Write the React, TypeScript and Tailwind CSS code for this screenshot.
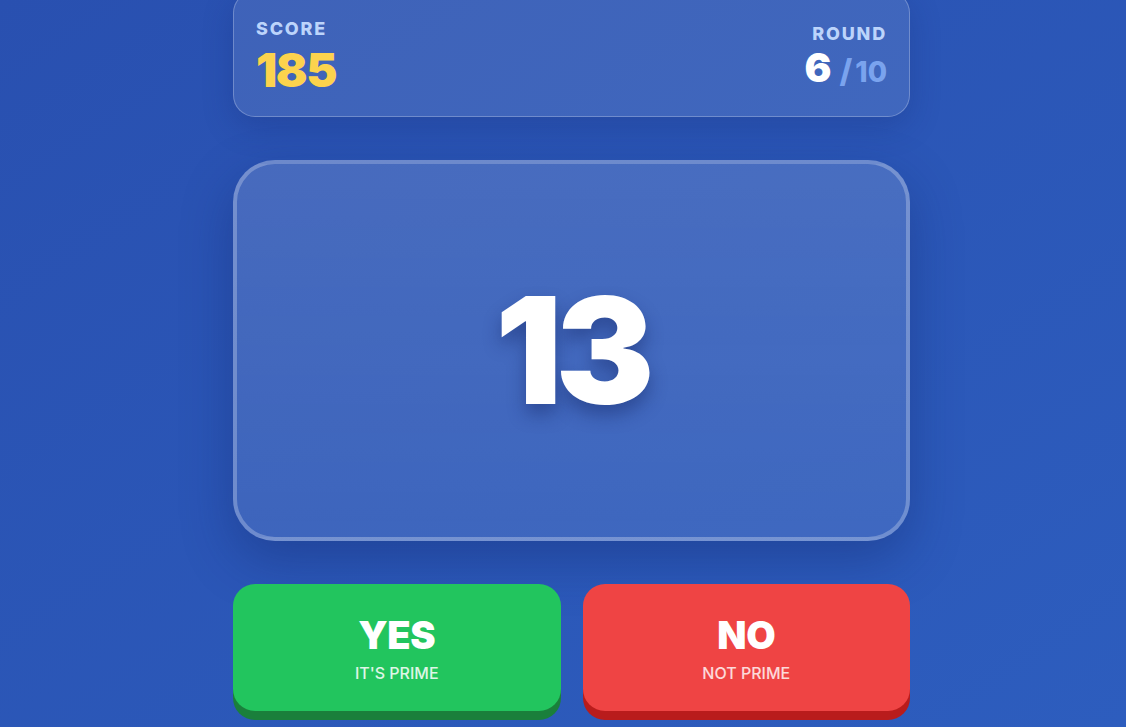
export default function App() {
  const score = 185;
  const round = 6;
  const totalRounds = 10;
  const current = 13;

  return (
    <div
      className="flex h-screen w-full flex-col items-center justify-center overflow-hidden bg-gradient-to-br from-[#2950b0] to-[#2d5dbe] pl-[17px]"
      style={{ fontFamily: "Inter, 'Noto Sans', sans-serif" }}
    >
      <div className="flex w-[677px] flex-col gap-[43px] pb-[25px]">
        {/* Score bar */}
        <div className="flex h-[126px] items-center justify-between rounded-[22px] border border-white/25 bg-white/10 px-[22px] pt-[2px] shadow-[0_10px_30px_rgba(20,40,110,0.25)]">
          <div className="flex flex-col">
            <span className="text-[18px] font-extrabold uppercase leading-[22px] tracking-[0.1em] text-[#bcd4fb]">
              Score
            </span>
            <span className="mt-[8px] text-[47px] font-black leading-[44px] tracking-[-0.03em] text-[#fcd34d]">
              {score}
            </span>
          </div>
          <div className="flex flex-col items-end">
            <span className="text-[18px] font-extrabold uppercase leading-[22px] tracking-[0.1em] text-[#bcd4fb]">
              Round
            </span>
            <div className="mt-[4px] flex items-baseline gap-[8px]">
              <span className="text-[40px] font-black leading-[38px] text-white">{round}</span>
              <span className="text-[28px] font-extrabold leading-[28px] text-[#7aa3ee]">
                <span className="text-[32px]">/</span>
                <span className="ml-[3px]">{totalRounds}</span>
              </span>
            </div>
          </div>
        </div>

        {/* Number card */}
        <div className="flex h-[381px] items-center justify-center rounded-[42px] border-4 border-white/25 bg-gradient-to-b from-white/[0.14] to-white/[0.09] shadow-[0_20px_50px_rgba(15,35,100,0.35)]">
          <span
            className="text-[148px] font-black leading-none tracking-[-0.045em] text-white"
            style={{ textShadow: "0 10px 18px rgba(15,30,90,0.4)" }}
          >
            {current}
          </span>
        </div>

        {/* Answer buttons */}
        <div className="grid h-[127px] grid-cols-2 gap-[22px]">
          <button className="flex flex-col items-center justify-center rounded-[22px] bg-[#22c55e] shadow-[0_9px_0_#1a7f3b]">
            <span className="text-[38px] font-black leading-[44px] tracking-[-0.01em] text-white">YES</span>
            <span className="mt-[6px] text-[16px] font-medium uppercase leading-[20px] text-white/85">
              It's prime
            </span>
          </button>
          <button className="flex flex-col items-center justify-center rounded-[22px] bg-[#ef4444] shadow-[0_9px_0_#b91c1c]">
            <span className="text-[38px] font-black leading-[44px] tracking-[-0.01em] text-white">NO</span>
            <span className="mt-[6px] text-[16px] font-medium uppercase leading-[20px] text-white/80">
              Not prime
            </span>
          </button>
        </div>
      </div>
    </div>
  );
}
